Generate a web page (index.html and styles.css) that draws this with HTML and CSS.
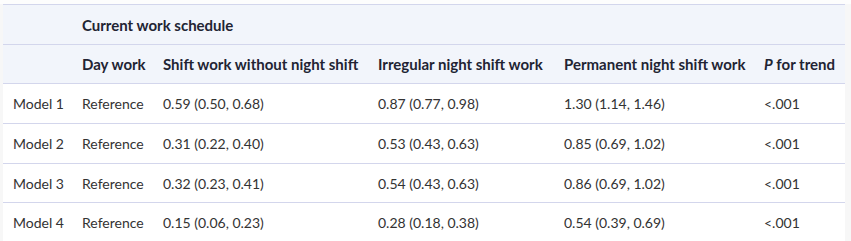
FILE: index.html
```html
<!DOCTYPE html>
<html>
<head>
<meta charset="utf-8">
<link rel="stylesheet" href="styles.css">
</head>
<body>
<div class="wrap">
<table class="tbl">
  <colgroup>
    <col class="c1"><col class="c2"><col class="c3"><col class="c4"><col class="c5"><col class="c6">
  </colgroup>
  <thead>
    <tr class="hd r1"><th></th><th colspan="5">Current work schedule</th></tr>
    <tr class="hd r2"><th></th><th>Day work</th><th>Shift work without night shift</th><th>Irregular night shift work</th><th>Permanent night shift work</th><th><i>P</i> for trend</th></tr>
  </thead>
  <tbody>
    <tr class="r1"><td>Model 1</td><td>Reference</td><td>0.59 (0.50, 0.68)</td><td>0.87 (0.77, 0.98)</td><td>1.30 (1.14, 1.46)</td><td>&lt;.001</td></tr>
    <tr class="r1"><td>Model 2</td><td>Reference</td><td>0.31 (0.22, 0.40)</td><td>0.53 (0.43, 0.63)</td><td>0.85 (0.69, 1.02)</td><td>&lt;.001</td></tr>
    <tr class="r2"><td>Model 3</td><td>Reference</td><td>0.32 (0.23, 0.41)</td><td>0.54 (0.43, 0.63)</td><td>0.86 (0.69, 1.02)</td><td>&lt;.001</td></tr>
    <tr class="r2"><td>Model 4</td><td>Reference</td><td>0.15 (0.06, 0.23)</td><td>0.28 (0.18, 0.38)</td><td>0.54 (0.39, 0.69)</td><td>&lt;.001</td></tr>
  </tbody>
</table>
</div>
</body>
</html>
```
FILE: styles.css
```css
html, body { margin: 0; padding: 0; background: #f7f7f7; }
.wrap { padding: 4px 6px 0 3px; background: linear-gradient(#fdfdfd 4px, #f7f7f7 4px); }
.tbl {
  width: 842px;
  border-collapse: collapse;
  table-layout: fixed;
  background: #fff;
  font-family: "Lato", "Noto Sans", sans-serif;
  font-size: 14px;
  color: #333;
}
.c1 { width: 69px; } .c2 { width: 81px; } .c3 { width: 215px; }
.c4 { width: 186px; } .c5 { width: 200px; } .c6 { width: 91px; }
.tbl th, .tbl td {
  text-align: left;
  padding: 0 0 0 10px;
  border-top: 1px solid #d3d6ec;
  white-space: nowrap;
  vertical-align: middle;
}
.tbl th { font-weight: 700; font-size: 15px; color: #222433; }
.hd th { background: #f2f5fb; }
.r1 > th, .r1 > td { height: 39px; }
.r2 > th, .r2 > td { height: 38px; }
```
